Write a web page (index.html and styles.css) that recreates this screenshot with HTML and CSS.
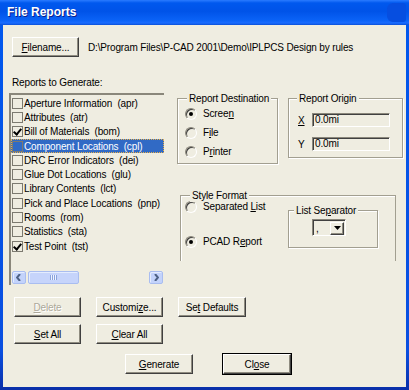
FILE: index.html
```html
<!DOCTYPE html>
<html lang="en">
<head>
<meta charset="UTF-8" />
<title>File Reports</title>
<link rel="stylesheet" href="styles.css">
</head>
<body>
  <div class="window">
    <div class="titlebar">
      <span class="title">File Reports</span>
      <span class="title-knob"></span>
    </div>
    <div class="client">
      <div class="file-row">
        <button class="btn"><u>F</u>ilename...</button>
        <span class="path">D:\Program Files\P-CAD 2001\Demo\IPLPCS Design by rules</span>
      </div>

      <div class="main">
        <div class="left">
          <div class="label">Reports to Generate:</div>
          <div class="listbox">
            <div class="items">
              <div class="item"><span class="check"></span><span class="text">Aperture Information  (apr)</span></div>
              <div class="item"><span class="check"></span><span class="text">Attributes  (atr)</span></div>
              <div class="item"><span class="check on"></span><span class="text">Bill of Materials  (bom)</span></div>
              <div class="item selected"><span class="check"></span><span class="text">Component Locations  (cpl)</span></div>
              <div class="item"><span class="check"></span><span class="text">DRC Error Indicators  (dei)</span></div>
              <div class="item"><span class="check"></span><span class="text">Glue Dot Locations  (glu)</span></div>
              <div class="item"><span class="check"></span><span class="text">Library Contents  (lct)</span></div>
              <div class="item"><span class="check"></span><span class="text">Pick and Place Locations  (pnp)</span></div>
              <div class="item"><span class="check"></span><span class="text">Rooms  (rom)</span></div>
              <div class="item"><span class="check"></span><span class="text">Statistics  (sta)</span></div>
              <div class="item"><span class="check on"></span><span class="text">Test Point  (tst)</span></div>
            </div>
            <div class="hscroll">
              <span class="sb-btn">
                <svg width="6" height="7" viewBox="0 0 6 7"><path d="M4 0 L1 3.5 L4 7" fill="none" stroke="#4d6185" stroke-width="2"/></svg>
              </span>
              <span class="sb-thumb"><span class="grip"></span></span>
              <span class="sb-track"></span>
              <span class="sb-btn">
                <svg width="6" height="7" viewBox="0 0 6 7"><path d="M2 0 L5 3.5 L2 7" fill="none" stroke="#4d6185" stroke-width="2"/></svg>
              </span>
            </div>
          </div>
        </div>

        <div class="right">
          <div class="top-groups">
            <div class="group dest">
              <span class="group-title">Report Destination</span>
              <div class="radio-row"><span class="radio on"></span><span>Scree<u>n</u></span></div>
              <div class="radio-row"><span class="radio"></span><span>F<u>i</u>le</span></div>
              <div class="radio-row"><span class="radio"></span><span>P<u>r</u>inter</span></div>
            </div>
            <div class="group origin">
              <span class="group-title">Report Origin</span>
              <div class="field-row"><span class="field-label"><u>X</u></span><span class="field">0.0mi</span></div>
              <div class="field-row"><span class="field-label">Y</span><span class="field">0.0mi</span></div>
            </div>
          </div>

          <div class="group style">
            <span class="group-title">Style Format</span>
            <div class="style-radios">
              <div class="radio-row"><span class="radio"></span><span>Separated <u>L</u>ist</span></div>
              <div class="radio-row"><span class="radio on"></span><span>PCAD R<u>e</u>port</span></div>
            </div>
            <div class="group separator">
              <span class="group-title">List Se<u>p</u>arator</span>
              <div class="combo">
                <span class="combo-value">,</span>
                <span class="combo-btn">
                  <svg width="7" height="4" viewBox="0 0 7 4"><path d="M0 0 H7 L3.5 4 Z" fill="#000"/></svg>
                </span>
              </div>
            </div>
          </div>
        </div>
      </div>

      <div class="buttons">
        <div class="btn-row">
          <button class="btn disabled"><u>D</u>elete</button>
          <button class="btn">Customi<u>z</u>e...</button>
          <button class="btn wide">Se<u>t</u> Defaults</button>
        </div>
        <div class="btn-row">
          <button class="btn"><u>S</u>et All</button>
          <button class="btn"><u>C</u>lear All</button>
        </div>
        <div class="btn-row actions">
          <button class="btn wide"><u>G</u>enerate</button>
          <button class="btn wide default">Cl<u>o</u>se</button>
        </div>
      </div>
    </div>
  </div>
</body>
</html>
```

FILE: styles.css
```css
body {
  margin: 0;
  width: 409px;
  height: 390px;
  overflow: hidden;
  background: #0055ea;
}

.window {
  width: 409px;
  height: 390px;
  box-sizing: border-box;
  display: flex;
  flex-direction: column;
  background: linear-gradient(to bottom, #0058ee 0%, #0a4fe0 90%, #0a2fa8 100%);
}

.titlebar {
  height: 25px;
  display: flex;
  align-items: center;
  padding-left: 7px;
  padding-right: 3px;
  background: linear-gradient(to bottom, #2a7bff 0%, #0058ee 12%, #0053e8 45%, #0a62f6 80%, #1a6cff 92%, #0a4fd8 100%);
}

.title {
  font-family: "Liberation Sans", Arial, sans-serif;
  font-weight: bold;
  font-size: 12px;
  color: #fff;
  text-shadow: 1px 1px #0a1f8c;
  margin-top: -1px;
}

.title-knob {
  margin-left: auto;
  width: 19px;
  height: 19px;
  border-radius: 6px 3px 3px 6px;
  background: #064ee0;
}

.client {
  flex: 1;
  margin: 0 3px 3px 3px;
  background: #efede1;
  font-family: "Liberation Sans", Arial, sans-serif;
  font-size: 10px;
  letter-spacing: -0.15px;
  line-height: 13px;
  color: #000;
}

/* filename row */
.file-row {
  display: flex;
  align-items: center;
  margin-top: 12px;
  padding-left: 9px;
}

.path {
  margin-left: 9px;
  white-space: nowrap;
}

/* buttons */
.btn {
  width: 67px;
  height: 20px;
  padding: 0;
  margin: 0;
  font: inherit;
  letter-spacing: inherit;
  color: #000;
  background: #efede1;
  border: 1px solid;
  border-color: #fff #404040 #404040 #fff;
  box-shadow: inset -1px -1px #8f8c80;
  white-space: nowrap;
}

.btn.wide {
  width: 68px;
}

.btn.disabled {
  color: #aca899;
  text-shadow: 1px 1px #fff;
}

.btn.default {
  outline: 1px solid #000;
  outline-offset: 0;
}

/* main area */
.main {
  display: flex;
  align-items: flex-start;
  height: 228px;
}

.left {
  margin-left: 6px;
  width: 155px;
}

.label {
  margin-top: 19px;
  margin-bottom: 4px;
  padding-left: 3px;
}

.listbox {
  height: 192px;
  box-sizing: border-box;
  display: flex;
  flex-direction: column;
  border-top: 2px solid #8a877b;
  border-left: 2px solid #8a877b;
  overflow: hidden;
}

.items {
  padding-top: 1px;
}

.item {
  height: 14.3px;
  display: flex;
  align-items: center;
  white-space: pre;
  box-sizing: border-box;
  padding-left: 1px;
}

.item.selected {
  background: #316ac5;
  color: #fff;
  outline: 1px dotted #e8b04a;
  outline-offset: -1px;
}

.check {
  flex: none;
  width: 11px;
  height: 11px;
  box-sizing: border-box;
  border: 1px solid #7c7a70;
  position: relative;
}

.check.on::after {
  content: "";
  position: absolute;
  left: 2px;
  top: 0px;
  width: 3px;
  height: 6px;
  border: solid #000;
  border-width: 0 2px 2px 0;
  transform: rotate(40deg);
}

.text {
  padding: 0 1px;
}

/* horizontal scrollbar */
.hscroll {
  margin-top: auto;
  margin-left: 1px;
  margin-bottom: 1px;
  width: 151px;
  height: 13px;
  display: flex;
  gap: 2px;
}

.sb-btn {
  width: 14px;
  height: 13px;
  box-sizing: border-box;
  display: flex;
  align-items: center;
  justify-content: center;
  background: #c3d3fb;
  border: 1px solid #a9bdf0;
  border-radius: 2px;
  box-shadow: inset 1px 1px #e4ecfe;
}

.sb-thumb {
  width: 51px;
  height: 13px;
  box-sizing: border-box;
  display: flex;
  align-items: center;
  justify-content: center;
  background: #c6d4fb;
  border: 1px solid #a9bdf0;
  border-radius: 2px;
  box-shadow: inset 1px 1px #e4ecfe;
}

.grip {
  width: 7px;
  height: 5px;
  background: repeating-linear-gradient(to right, #8aa2dc 0 1px, #eef3ff 1px 2px);
}

.sb-track {
  flex: 1;
}

/* right side groups */
.right {
  margin-left: 13px;
}

.top-groups {
  display: flex;
  margin-top: 41px;
}

.group {
  position: relative;
  box-sizing: border-box;
  border: 1px solid #a29f90;
  box-shadow: inset 1px 1px #fff, 1px 1px #fff;
}

.group-title {
  position: absolute;
  top: -7px;
  left: 9px;
  padding: 0 2px;
  background: #efede1;
  white-space: nowrap;
}

.dest {
  width: 101px;
  height: 66px;
  padding: 5px 0 0 7px;
}

.radio-row {
  height: 19px;
  display: flex;
  align-items: center;
  white-space: nowrap;
}

.radio {
  flex: none;
  width: 12px;
  height: 12px;
  box-sizing: border-box;
  border-radius: 50%;
  border: 1px solid;
  border-color: #8a877b #fff #fff #8a877b;
  box-shadow: inset 1px 1px #404040;
  margin-right: 6px;
  display: flex;
  align-items: center;
  justify-content: center;
}

.radio.on::after {
  content: "";
  width: 4px;
  height: 4px;
  border-radius: 50%;
  background: #000;
}

.origin {
  width: 115px;
  height: 60px;
  margin-left: 10px;
  padding: 14px 0 0 9px;
}

.origin .group-title {
  left: 8px;
}

.field-row {
  display: flex;
  align-items: center;
  height: 14px;
  margin-bottom: 10px;
}

.field-label {
  width: 14px;
}

.field {
  width: 78px;
  height: 14px;
  box-sizing: border-box;
  border: 1px solid;
  border-color: #8a877b #fff #fff #8a877b;
  box-shadow: inset 1px 1px #404040;
  padding-left: 2px;
  line-height: 12px;
}

.style {
  width: 216px;
  height: 66px;
  margin-top: 31px;
  margin-left: 3px;
  border-bottom: none;
  box-shadow: inset 1px 1px #fff;
  display: flex;
  align-items: flex-start;
  padding: 1px 17px 0 4px;
}

.style-radios {
  display: flex;
  flex-direction: column;
  gap: 16px;
}

.separator {
  margin-left: auto;
  margin-top: 13px;
  width: 90px;
  height: 38px;
  padding: 8px 0 0 23px;
}

.separator .group-title {
  left: 5px;
}

.combo {
  width: 34px;
  height: 17px;
  box-sizing: border-box;
  display: flex;
  align-items: center;
  border: 1px solid;
  border-color: #8a877b #fff #fff #8a877b;
  box-shadow: inset 1px 1px #404040;
  padding: 1px 1px 0 3px;
}

.combo-value {
  flex: 1;
}

.combo-btn {
  width: 14px;
  height: 13px;
  box-sizing: border-box;
  display: flex;
  align-items: center;
  justify-content: center;
  background: #efede1;
  border: 1px solid;
  border-color: #fff #404040 #404040 #fff;
  box-shadow: inset -1px -1px #8f8c80;
}

/* bottom buttons */
.buttons {
  margin-top: 12px;
}

.btn-row {
  display: flex;
  gap: 15px;
  padding-left: 11px;
  margin-bottom: 7px;
}

.btn-row.actions {
  gap: 30px;
  padding-left: 122px;
  margin-top: 10px;
}
```
